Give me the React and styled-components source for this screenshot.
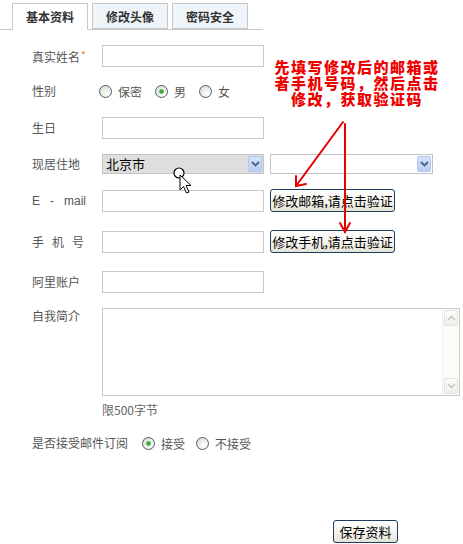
import React from 'react';
import styled, { createGlobalStyle } from 'styled-components';

const Global = createGlobalStyle`
  html, body { margin: 0; padding: 0; background: #fff; }
  body {
    font-family: "Noto Sans CJK SC", "Noto Sans", sans-serif;
    font-size: 12px;
    color: #555;
  }
`;

const Page = styled.div`
  position: relative;
  width: 463px;
  height: 544px;
  overflow: hidden;
`;

const TabBar = styled.div`
  display: flex;
  align-items: flex-end;
  gap: 4px;
  box-sizing: border-box;
  width: 263px;
  height: 30px;
  padding-left: 12px;
  border-bottom: 1px solid #c8c8c8;
`;

const Tab = styled.div`
  box-sizing: border-box;
  height: ${p => (p.$active ? 27 : 26)}px;
  margin-bottom: ${p => (p.$active ? -1 : 0)}px;
  padding: 0 13px;
  display: flex;
  align-items: center;
  border: 1px solid #c8c8c8;
  border-bottom: ${p => (p.$active ? 'none' : '1px solid #c8c8c8')};
  background: ${p => (p.$active ? '#fff' : '#eff4f9')};
  color: #333;
  font-weight: bold;
  font-size: 12px;
  padding-bottom: ${p => (p.$active ? 1 : 0)}px;
`;

const Form = styled.div`
  display: flex;
  flex-direction: column;
  padding-left: 32px;
`;

const Row = styled.div`
  display: flex;
  align-items: ${p => (p.$top ? 'flex-start' : 'center')};
  margin-top: ${p => p.$mt}px;
  height: ${p => p.$h}px;
`;

const Label = styled.div`
  width: ${p => p.$w ?? 70}px;
  flex-shrink: 0;
  color: #555;
  font-size: 12px;
  line-height: 16px;
  white-space: pre;
  letter-spacing: ${p => p.$ls ?? 0}px;
  padding-top: ${p => p.$pt ?? 0}px;
  font-family: ${p => (p.$latin ? '"Liberation Sans", Arial, sans-serif' : 'inherit')};
`;

const Star = styled.span`
  color: #e0773a;
  font-size: 10px;
  vertical-align: 3px;
  margin-left: 1px;
`;

const TextInput = styled.input`
  box-sizing: border-box;
  width: 162px;
  height: 22px;
  margin: 0;
  padding: 0 4px;
  border: 1px solid #c9c9c9;
  background: #fff;
  font: inherit;
  outline: none;
`;

const SelectBox = styled.div`
  box-sizing: border-box;
  width: ${p => p.$w}px;
  height: 20px;
  display: flex;
  align-items: center;
  border: 1px solid #c3c3c3;
  background: ${p => p.$bg};
  margin-right: ${p => p.$mr ?? 0}px;
`;

const SelectText = styled.span`
  flex: 1;
  padding-left: 3px;
  color: #000;
  font-size: 13px;
  line-height: 18px;
`;

const SelectArrow = styled.span`
  box-sizing: border-box;
  width: 14px;
  height: 16px;
  margin-right: 1px;
  display: flex;
  align-items: center;
  justify-content: center;
  border: 1px solid #b6c8ef;
  border-radius: 2px;
  background: linear-gradient(#d6e2fb, #b9cdf4);
`;

const ActionButton = styled.button`
  box-sizing: border-box;
  width: ${p => p.$w}px;
  height: 23px;
  margin: 0 0 0 ${p => p.$ml ?? 0}px;
  padding: 0;
  border: 1px solid #1f3d5e;
  border-radius: 3px;
  background: linear-gradient(#ffffff, #f3f2ec 60%, #e4e2d6);
  color: #000;
  font-family: "Noto Sans CJK SC", sans-serif;
  font-size: 13px;
  line-height: 21px;
  white-space: nowrap;
  cursor: pointer;
`;

const RadioGroup = styled.div`
  display: flex;
  align-items: center;
  gap: ${p => p.$gap}px;
  margin-left: ${p => p.$ml}px;
`;

const RadioOption = styled.label`
  display: flex;
  align-items: center;
  gap: 6px;
  color: #555;
  font-size: 12px;
`;

const RadioCircle = styled.span`
  position: relative;
  box-sizing: border-box;
  width: 13px;
  height: 13px;
  border-radius: 50%;
  border: 1px solid #4a5e72;
  background: radial-gradient(circle at 65% 70%, #ffffff 0%, #e8e8e2 60%, #d4d4cc 100%);

  &::after {
    content: '';
    display: ${p => (p.$checked ? 'block' : 'none')};
    position: absolute;
    left: 3px;
    top: 3px;
    width: 5px;
    height: 5px;
    border-radius: 50%;
    background: radial-gradient(circle, #2f9a2f 0%, #4fbf4f 60%, #b9e6b9 100%);
  }
`;

const TextAreaBox = styled.div`
  box-sizing: border-box;
  width: 358px;
  height: 88px;
  display: flex;
  border: 1px solid #c9c9c9;
  background: #fff;
`;

const PlainTextArea = styled.textarea`
  flex: 1;
  border: none;
  resize: none;
  outline: none;
  margin: 0;
  padding: 3px;
  font: inherit;
`;

const ScrollBar = styled.div`
  box-sizing: border-box;
  width: 17px;
  display: flex;
  flex-direction: column;
  justify-content: space-between;
  padding: 1px 0;
  background: #fbfbf8;
  border-left: 1px solid #f1f1ec;
`;

const ScrollButton = styled.div`
  box-sizing: border-box;
  height: 16px;
  margin: 0 1px;
  display: flex;
  align-items: center;
  justify-content: center;
  border: 1px solid #e4e4dc;
  border-radius: 2px;
  background: linear-gradient(#fbfbf8, #f0f0ea);
`;

const Hint = styled.div`
  margin-left: 70px;
  color: #666;
  font-size: 12px;
  line-height: 16px;
`;

const Note = styled.div`
  position: absolute;
  left: 267px;
  top: 59px;
  width: 180px;
  text-align: center;
  color: #ee0000;
  font-family: "Noto Sans CJK SC", sans-serif;
  font-weight: 900;
  font-size: 15px;
  line-height: 16px;
  letter-spacing: 1.5px;
`;

const Overlay = styled.svg`
  position: absolute;
  left: 0;
  top: 0;
  pointer-events: none;
`;

const Chevron = ({ up, color = '#4a5f86', w = 1.8 }) => (
  <svg width="9" height="6" viewBox="0 0 9 6">
    <polyline
      points={up ? '1,5 4.5,1.5 8,5' : '1,1 4.5,4.5 8,1'}
      fill="none"
      stroke={color}
      strokeWidth={w}
    />
  </svg>
);

const Radio = ({ checked, children }) => (
  <RadioOption>
    <RadioCircle $checked={checked} />
    {children}
  </RadioOption>
);

export default function App() {
  return (
    <Page>
      <Global />
      <TabBar>
        <Tab $active>基本资料</Tab>
        <Tab>修改头像</Tab>
        <Tab>密码安全</Tab>
      </TabBar>

      <Form>
        <Row $mt={15} $h={22}>
          <Label>真实姓名<Star>*</Star></Label>
          <TextInput />
        </Row>

        <Row $mt={13} $h={22}>
          <Label>性别</Label>
          <RadioGroup $gap={13} $ml={-3}>
            <Radio>保密</Radio>
            <Radio checked>男</Radio>
            <Radio>女</Radio>
          </RadioGroup>
        </Row>

        <Row $mt={15} $h={22}>
          <Label>生日</Label>
          <TextInput />
        </Row>

        <Row $mt={15} $h={20}>
          <Label>现居住地</Label>
          <SelectBox $w={162} $bg="#dedede" $mr={6}>
            <SelectText>北京市</SelectText>
            <SelectArrow><Chevron /></SelectArrow>
          </SelectBox>
          <SelectBox $w={163} $bg="#fff">
            <SelectText />
            <SelectArrow><Chevron /></SelectArrow>
          </SelectBox>
        </Row>

        <Row $mt={15} $h={23}>
          <Label $latin>{'E   -   mail'}</Label>
          <TextInput />
          <ActionButton $w={125} $ml={6}>修改邮箱,请点击验证</ActionButton>
        </Row>

        <Row $mt={18} $h={23}>
          <Label $ls={8}>手机号</Label>
          <TextInput />
          <ActionButton $w={125} $ml={6}>修改手机,请点击验证</ActionButton>
        </Row>

        <Row $mt={18} $h={22}>
          <Label>阿里账户</Label>
          <TextInput />
        </Row>

        <Row $mt={15} $h={88} $top>
          <Label $pt={0}>自我简介</Label>
          <TextAreaBox>
            <PlainTextArea />
            <ScrollBar>
              <ScrollButton><Chevron up color="#c4c4bc" w={1.4} /></ScrollButton>
              <ScrollButton><Chevron color="#c4c4bc" w={1.4} /></ScrollButton>
            </ScrollBar>
          </TextAreaBox>
        </Row>

        <Row $mt={6} $h={16}>
          <Hint>限500字节</Hint>
        </Row>

        <Row $mt={15} $h={20}>
          <Label $w={110}>是否接受邮件订阅</Label>
          <RadioGroup $gap={11} $ml={0}>
            <Radio checked>接受</Radio>
            <Radio>不接受</Radio>
          </RadioGroup>
        </Row>

        <Row $mt={67} $h={23}>
          <ActionButton $w={65} $ml={301}>保存资料</ActionButton>
        </Row>
      </Form>

      <Note>
        先填写修改后的邮箱或<br />
        者手机号码，然后点击<br />
        修改，获取验证码
      </Note>

      <Overlay width="463" height="544" viewBox="0 0 463 544">
        <g stroke="#e60000" strokeWidth="2" fill="none" strokeLinecap="round">
          <line x1="343" y1="122" x2="296" y2="186" />
          <polyline points="296,176 296,186 306,184" />
          <line x1="345" y1="124" x2="345" y2="232" />
          <polyline points="340,223 345,232 350,223" />
        </g>
        <circle cx="179" cy="173" r="5" fill="#fff" stroke="#000" strokeWidth="1.2" />
        <polygon
          points="180,175 180,190 183.5,186.5 186.5,193 189,192 186,185.5 191,185.5"
          fill="#fff"
          stroke="#000"
          strokeWidth="1"
          strokeLinejoin="round"
        />
      </Overlay>
    </Page>
  );
}
